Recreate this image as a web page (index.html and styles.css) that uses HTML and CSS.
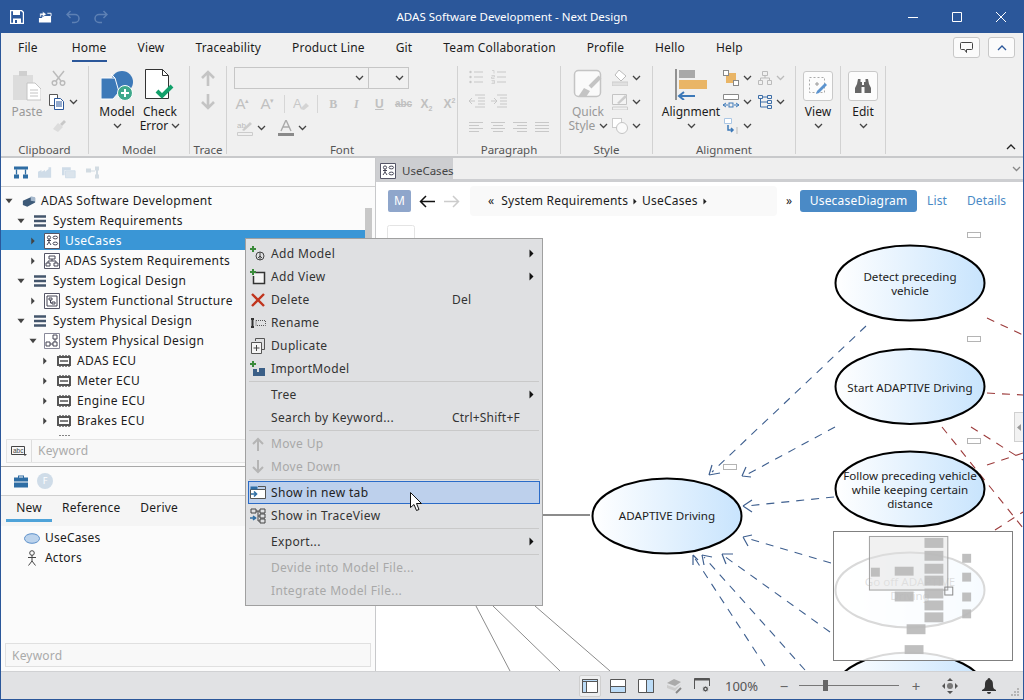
FILE: index.html
```html
<!DOCTYPE html>
<html lang="en">
<head>
<meta charset="utf-8">
<title>ADAS Software Development - Next Design</title>
<link rel="stylesheet" href="styles.css">
</head>
<body>
<svg class="defs" width="0" height="0" aria-hidden="true">
  <defs>
    <symbol id="chev" viewBox="0 0 9 6"><path d="M1 1l3.5 3.5L8 1" fill="none" stroke="currentColor" stroke-width="1.3"/></symbol>
    <symbol id="tri" viewBox="0 0 5 9"><path d="M0.5 0.5L4.5 4.5L0.5 8.5z" fill="currentColor"/></symbol>
    <symbol id="down" viewBox="0 0 9 6"><path d="M0.5 0.5h8L4.5 5.5z" fill="currentColor"/></symbol>
    <symbol id="folder" viewBox="0 0 12 12"><path d="M0 1.500h12M0 6h12M0 10.500h12" stroke="currentColor" stroke-width="2.600" fill="none"/></symbol>
    <symbol id="chip" viewBox="0 0 14 14"><path d="M1 3h12v8H1z" fill="none" stroke="currentColor" stroke-width="2"/><path d="M3 1v2M6 1v2M9 1v2M12 1v2M3 11v2M6 11v2M9 11v2M12 11v2M3 7h8" stroke="currentColor" stroke-width="1.400"/></symbol>
    <symbol id="usecase" viewBox="0 0 16 16"><path d="M.5.500h15v15H.5z" fill="#fff" stroke="#556" /><circle cx="5" cy="4.500" r="1.600" fill="none" stroke="#445"/><path d="M5 6v3M3 7.500h4M5 9l-2 3M5 9l2 3" stroke="#445" fill="none"/><ellipse cx="11.300" cy="4.500" rx="2.300" ry="1.400" fill="none" stroke="#445"/><ellipse cx="11.300" cy="10.500" rx="2.300" ry="1.400" fill="none" stroke="#445"/></symbol>
    <symbol id="listicon" viewBox="0 0 16 14"><circle cx="1.500" cy="2" r="1.200" fill="currentColor"/><circle cx="1.500" cy="7" r="1.200" fill="currentColor"/><circle cx="1.500" cy="12" r="1.200" fill="currentColor"/><path d="M5 2h9M5 7h9M5 12h9" stroke="currentColor"/></symbol>
    <symbol id="numicon" viewBox="0 0 16 14"><path d="M1 .5h2v3M.5 5.500h3v1.500h-3v1.500h3M.5 10.500h3v3h-3M1 12h2.500" fill="none" stroke="currentColor" stroke-width=".7"/><path d="M6 2h9M6 7h9M6 12h9" stroke="currentColor"/></symbol>
    <symbol id="lines" viewBox="0 0 14 10"><path d="M0 .5h14M0 3.500h14M0 6.500h14M0 9.500h14" stroke="currentColor"/></symbol>
    <symbol id="lines2" viewBox="0 0 14 10"><path d="M0 .5h14M2 3.500h10M0 6.500h14M2 9.500h10" stroke="currentColor"/></symbol>
    <symbol id="lines3" viewBox="0 0 14 10"><path d="M0 .5h14M4 3.500h10M0 6.500h14M4 9.500h10" stroke="currentColor"/></symbol>
    <symbol id="lines4" viewBox="0 0 14 10"><path d="M0 .5h14M0 3.500h10M0 6.500h14M0 9.500h10" stroke="currentColor"/></symbol>
  </defs>
</svg>

<header class="titlebar">
  <div class="qat">
    <svg class="qat-icon" viewBox="0 0 14 14"><path d="M.5.500h11l2 2v11H.5z" fill="none" stroke="#fff" stroke-width="1.400"/><path d="M3 1h7v4H3zM3 8.500h8V13H3z" fill="#fff"/><path d="M5 10h2v3H5z" fill="#2b579a"/></svg>
    <svg class="qat-icon" viewBox="0 0 15 14"><path d="M1 8h3l1-2h9v7H1z" fill="#fff"/><path d="M2 7V3h3V1l4 3-4 3V5H3.500v2z" fill="#fff" stroke="#2b579a" stroke-width=".5"/><path d="M10 3h4v3" fill="none" stroke="#fff"/></svg>
    <svg class="qat-icon faded" viewBox="0 0 14 14"><path d="M4.500 1L1 4.500 4.500 8M1.500 4.500H9a4 4 0 0 1 0 8H6" fill="none" stroke="#5d80b4" stroke-width="1.500"/></svg>
    <svg class="qat-icon faded" viewBox="0 0 14 14"><path d="M9.500 1L13 4.500 9.500 8M12.500 4.500H5a4 4 0 0 0 0 8h3" fill="none" stroke="#5d80b4" stroke-width="1.500"/></svg>
  </div>
  <div class="wintitle">ADAS Software Development - Next Design</div>
  <div class="winbtns">
    <svg viewBox="0 0 10 10"><path d="M0 5.500h10" stroke="#fff"/></svg>
    <svg viewBox="0 0 10 10"><path d="M.5.500h9v9h-9z" fill="none" stroke="#fff"/></svg>
    <svg viewBox="0 0 10 10"><path d="M0 0l10 10M10 0L0 10" stroke="#fff"/></svg>
  </div>
</header>

<nav class="tabs">
  <span class="tab tab-file">File</span>
  <span class="tab tab-on">Home</span>
  <span class="tab">View</span>
  <span class="tab">Traceability</span>
  <span class="tab">Product Line</span>
  <span class="tab">Git</span>
  <span class="tab">Team Collaboration</span>
  <span class="tab">Profile</span>
  <span class="tab">Hello</span>
  <span class="tab">Help</span>
  <div class="tab-tools">
    <span class="toolbtn"><svg width="13" height="13" viewBox="0 0 13 13"><path d="M1.500 1.500h10a1 1 0 0 1 1 1v5a1 1 0 0 1-1 1H6.500v3l-2-3h-3a1 1 0 0 1-1-1v-5a1 1 0 0 1 1-1z" fill="none" stroke="#444"/></svg></span>
    <span class="toolbtn"><svg width="10" height="6" viewBox="0 0 10 6"><path d="M1 5l4-4 4 4" fill="none" stroke="#2b579a" stroke-width="1.300"/></svg></span>
  </div>
</nav>

<section class="ribbon">
  <div class="group g-clip">
    <div class="g-body clip-body">
      <div class="big dim">
        <svg class="paste" viewBox="0 0 28 31"><path d="M0 5h20v25H0z" fill="#dcdcdc"/><path d="M6 1h8v5H6z" fill="#cfcfcf"/><path d="M14 13h8l6 6v11H14z" fill="#fff" stroke="#c4c4c4"/><path d="M17 20h8M17 23h8M17 26h8" stroke="#c4c4c4"/></svg>
        <span class="ln">Paste</span>
      </div>
      <div class="small-col">
        <svg class="ic16 inset" viewBox="0 0 16 16"><circle cx="3.500" cy="13" r="2.300" fill="none" stroke="#bbb" stroke-width="1.500"/><circle cx="11.500" cy="13" r="2.300" fill="none" stroke="#bbb" stroke-width="1.500"/><path d="M2 1l8 10M13 1L5 11" stroke="#bbb" stroke-width="1.500"/></svg>
        <div class="small"><svg class="ic16" viewBox="0 0 16 16"><path d="M.5.500h8v11h-8z" fill="#fff" stroke="#555"/><path d="M5.500 4.500h6l3 3v8h-9z" fill="#fff" stroke="#2b579a"/><path d="M7 8h6M7 10h6M7 12h6" stroke="#2b579a"/></svg><svg class="chev" ><use href="#chev"/></svg></div>
        <svg class="ic16 inset" viewBox="0 0 16 16"><path d="M9 6l4-4 2 2-4 4z" fill="#c8c8c8"/><path d="M2 11l5-6 5 4-5 5z" fill="#dcdcdc"/></svg>
      </div>
    </div>
    <div class="g-label">Clipboard</div>
  </div>

  <div class="group g-model">
    <div class="g-body model-body">
      <div class="big">
        <svg class="bigicon" viewBox="0 0 32 31"><circle cx="21" cy="13" r="11" fill="#3d79b8"/><path d="M0 9h14l4 14-6 7H0z" fill="#3d79b8" stroke="#fff"/><path d="M14 9l-4-4" stroke="#fff"/><circle cx="24" cy="24" r="7.500" fill="#3fa88b" stroke="#fff"/><path d="M24 20v8M20 24h8" stroke="#fff" stroke-width="2"/></svg>
        <span class="ln">Model</span>
        <svg class="chev lnchev"><use href="#chev"/></svg>
      </div>
      <div class="big">
        <svg class="bigicon" viewBox="0 0 32 31"><path d="M1.500.500h17l6 6v23h-23z" fill="#fff" stroke="#333"/><path d="M18.500.500v6h6" fill="none" stroke="#333"/><path d="M13 22l5 5 10-10" fill="none" stroke="#12a06a" stroke-width="4"/></svg>
        <span class="ln2">Check<br>Error <svg class="chev inl"><use href="#chev"/></svg></span>
      </div>
    </div>
    <div class="g-label">Model</div>
  </div>

  <div class="group g-trace">
    <div class="g-body trace-body">
      <svg class="ic16" viewBox="0 0 16 16"><path d="M8 16V2M2 8l6-6 6 6" fill="none" stroke="#c4c4c4" stroke-width="2.600"/></svg>
      <svg class="ic16" viewBox="0 0 16 16"><path d="M8 0v14M2 8l6 6 6-6" fill="none" stroke="#c4c4c4" stroke-width="2.600"/></svg>
    </div>
    <div class="g-label">Trace</div>
  </div>

  <div class="group g-font">
    <div class="g-body font-body">
      <div class="combos">
        <span class="combo c-name"><svg class="chev"><use href="#chev"/></svg></span>
        <span class="combo c-size"><svg class="chev"><use href="#chev"/></svg></span>
      </div>
      <div class="font-row">
        <span class="glyph g-a1">A<sup>▴</sup></span><span class="glyph g-a2">A<sup>▾</sup></span>
        <i class="vsep"></i>
        <svg class="ic16" viewBox="0 0 16 16"><text x="0" y="12" font-size="13" fill="#c8c8c8" font-family="Liberation Sans">A</text><path d="M7 13l6-6 3 3-5 4z" fill="#d4d4d4"/></svg>
        <i class="vsep"></i>
        <span class="glyph b">B</span><span class="glyph it">I</span><span class="glyph u">U</span><span class="glyph st">abc</span><span class="glyph x1">X<sub>2</sub></span><span class="glyph x2">X<sup>2</sup></span>
      </div>
      <div class="font-row fr3">
        <div class="small"><svg class="ic16" viewBox="0 0 16 16"><text x="0" y="8" font-size="8" fill="#bbb" font-family="Liberation Sans">ab</text><path d="M5 10l8-8 2 2-8 7z" fill="#ccc"/><path d="M.5 12.500h15v3H.5z" fill="none" stroke="#ccc"/></svg><svg class="chev"><use href="#chev"/></svg></div>
        <div class="small"><svg class="ic16" viewBox="0 0 16 16"><path d="M3 11L8 0l5 11M5 7h6" fill="none" stroke="#aaa" stroke-width="1.400"/><path d="M0 13h16v3H0z" fill="#8a8a8a"/></svg><svg class="chev"><use href="#chev"/></svg></div>
      </div>
    </div>
    <div class="g-label">Font</div>
  </div>

  <div class="group g-para">
    <div class="g-body para-body">
      <div class="para-row"><svg class="ic14" viewBox="0 0 16 14"><use href="#listicon"/></svg><svg class="ic14" viewBox="0 0 16 14"><use href="#numicon"/></svg></div>
      <div class="para-row"><svg class="ic14 lg" viewBox="0 0 16 14"><path d="M6 1h10M9 4h7M9 7h7M9 10h7M6 13h10M0 7h6M3 4L0 7l3 3" fill="none" stroke="#c8c8c8"/></svg><svg class="ic14 lg" viewBox="0 0 16 14"><path d="M6 1h10M9 4h7M9 7h7M9 10h7M6 13h10M0 7h6M3 4l3 3-3 3" fill="none" stroke="#c8c8c8"/></svg></div>
      <div class="para-row align-row"><svg class="ic-al"><use href="#lines4"/></svg><svg class="ic-al"><use href="#lines2"/></svg><svg class="ic-al"><use href="#lines3"/></svg><svg class="ic-al"><use href="#lines"/></svg></div>
    </div>
    <div class="g-label">Paragraph</div>
  </div>

  <div class="group g-style">
    <div class="g-body style-body">
      <div class="big dim">
        <svg class="bigicon" viewBox="0 0 32 31"><rect x="2.500" y="1.500" width="26" height="26" rx="4" fill="#fafafa" stroke="#c4c4c4" stroke-width="1.500"/><path d="M28 8L18 18" stroke="#c4c4c4" stroke-width="4"/><path d="M6 28l6-9 6 3-4 6z" fill="#c4c4c4"/></svg>
        <span class="ln2">Quick<br>Style <svg class="chev inl"><use href="#chev"/></svg></span>
      </div>
      <div class="small-col">
        <div class="small"><svg class="ic16" viewBox="0 0 16 16"><path d="M7 0l7 6-5 5-6-6z" fill="#fff" stroke="#bbb"/><path d="M0 12h16v4H0z" fill="#e0e0e0" stroke="#ccc"/></svg><svg class="chev"><use href="#chev"/></svg></div>
        <div class="small"><svg class="ic16" viewBox="0 0 16 16"><path d="M.5.500h14v10H.5z" fill="#f4f4f4" stroke="#c4c4c4"/><path d="M5 9l8-8 2 2-8 7z" fill="#ccc"/><path d="M.5 13h15v3H.5z" fill="none" stroke="#ccc"/></svg><svg class="chev"><use href="#chev"/></svg></div>
        <div class="small"><svg class="ic16" viewBox="0 0 16 16"><rect x=".5" y=".5" width="9" height="9" fill="#fff" stroke="#ccc"/><circle cx="10" cy="10" r="5.500" fill="#fafafa" stroke="#c4c4c4"/></svg><svg class="chev"><use href="#chev"/></svg></div>
      </div>
    </div>
    <div class="g-label">Style</div>
  </div>

  <div class="group g-align">
    <div class="g-body align-body">
      <div class="big big-al">
        <svg class="bigicon" viewBox="0 0 32 31"><path d="M1 0v31" stroke="#333" stroke-width="1"/><path d="M4 1h16v8H4z" fill="#a8a8a8"/><path d="M4 11h28v9H4z" fill="#e9b566"/><path d="M20 27H4M9 23l-5 4 5 4" fill="none" stroke="#3d79b8" stroke-width="2"/></svg>
        <span class="ln">Alignment</span>
        <svg class="chev lnchev"><use href="#chev"/></svg>
      </div>
      <div class="small-col">
        <div class="small"><svg class="ic16" viewBox="0 0 16 16"><rect x="3" y="3" width="10" height="10" fill="#e9b566"/><rect x=".5" y=".5" width="5" height="5" fill="#fff" stroke="#888"/><rect x="10.500" y="10.500" width="5" height="5" fill="#fff" stroke="#888"/></svg><svg class="chev"><use href="#chev"/></svg></div>
        <div class="small"><svg class="ic16" viewBox="0 0 16 16"><path d="M.5.500h15v5H.5z" fill="#fff" stroke="#888"/><path d="M0 11h5M11 11h5M3 9l-3 2 3 2M13 9l3 2-3 2" fill="none" stroke="#3d79b8"/><rect x="6" y="9" width="4" height="4" fill="none" stroke="#3d79b8"/></svg><svg class="chev"><use href="#chev"/></svg></div>
        <div class="small"><svg class="ic16" viewBox="0 0 16 16"><path d="M1.500.5h7v5h-7z" fill="#fff" stroke="#aac6e4"/><path d="M5 7v5h5M8 10l2 2-2 2" fill="none" stroke="#3d79b8" stroke-width="1.500"/><path d="M14 9v7" stroke="#bbb"/></svg><svg class="chev"><use href="#chev"/></svg></div>
      </div>
      <div class="small-col small-col-2">
        <div class="small"><svg class="ic14b" viewBox="0 0 14 14"><path d="M4.500.5h5v4h-5zM.5 9.500h4v4h-4zM9.500 9.500h4v4h-4zM7 4.500V7M2.500 9.500V7h9v2.500" fill="none" stroke="#bbb"/></svg><svg class="chev light"><use href="#chev"/></svg></div>
        <div class="small"><svg class="ic14b" viewBox="0 0 14 14"><path d="M.5.500h4v3h-4zM9.500.500h4v3h-4zM9.500 5.500h4v3h-4zM9.500 10.500h4v3h-4zM4.500 2h5M2.500 3.500V12h7M2.500 7h7" fill="none" stroke="#3d6ea8"/></svg><svg class="chev"><use href="#chev"/></svg></div>
      </div>
    </div>
    <div class="g-label">Alignment</div>
  </div>

  <div class="group g-btn">
    <div class="g-body btn-body">
      <span class="whitebtn"><svg width="18" height="18" viewBox="0 0 18 18"><path d="M.5.500h15v15H.5z" fill="none" stroke="#aaa" stroke-dasharray="2 2"/><path d="M8 5v4M6 7h4" stroke="#999"/><path d="M8 14l8-8 2 2-8 8-3 1z" fill="#5b93cf"/></svg></span>
      <span class="ln">View</span>
      <svg class="chev lnchev"><use href="#chev"/></svg>
    </div>
  </div>
  <div class="group g-btn">
    <div class="g-body btn-body">
      <span class="whitebtn"><svg width="16" height="14" viewBox="0 0 16 14"><path d="M3 0h2.500v3H7v3h2V3h1.500V0H13l1 5 2 4v5h-6.500V8h-3v6H0V9l2-4z" fill="#666"/></svg></span>
      <span class="ln">Edit</span>
      <svg class="chev lnchev"><use href="#chev"/></svg>
    </div>
  </div>
  <svg class="collapse" width="10" height="6" viewBox="0 0 10 6"><path d="M1 5l4-4 4 4" fill="none" stroke="#222" stroke-width="1.300"/></svg>
</section>

<main class="main">
  <aside class="left">
    <div class="lt-toolbar">
      <svg class="ic-tb" viewBox="0 0 14 12"><path d="M0 0h14v3H0zM0 8h5v4H0zM9 8h5v4H9z" fill="#2e6da4"/><path d="M2.500 3v5M11.500 3v5" stroke="#2e6da4" stroke-width="1.300"/></svg>
      <svg class="ic-tb" viewBox="0 0 16 12"><path d="M0 5l4-2v2l4-2v2l4-3V0h3v12H0z" fill="#cfdce8"/></svg>
      <svg class="ic-tb" viewBox="0 0 16 12"><path d="M0 0h10v3h-7v6H0z" fill="#cfdce8"/><path d="M4 4h11v8H4z" fill="#dbe4ec" stroke="#cfdce8"/></svg>
      <svg class="ic-tb" viewBox="0 0 14 12"><path d="M0 2h5v4H0zM9 0h4v4H9zM9 8h4v4H9zM5 4h4v1H5zM10 4h2v4h-2z" fill="#d2dbe2"/></svg>
    </div>
    <div class="tree">
      <div class="node"><svg class="tw"><use href="#down"/></svg><svg class="nic root" viewBox="0 0 16 14"><path d="M1 6l9-4 5 1v5l-9 5-5-2z" fill="#3d5a78"/><path d="M10 1l5 1v5l-5-1z" fill="#a5b8cc"/></svg><span>ADAS Software Development</span></div>
      <div class="node l1"><svg class="tw"><use href="#down"/></svg><svg class="nic fold"><use href="#folder"/></svg><span>System Requirements</span></div>
      <div class="node l2 sel"><svg class="tw"><use href="#tri"/></svg><svg class="nic" viewBox="0 0 16 16"><use href="#usecase"/></svg><span>UseCases</span></div>
      <div class="node l2"><svg class="tw"><use href="#tri"/></svg><svg class="nic" viewBox="0 0 16 16"><path d="M.5.500h15v15H.5z" fill="#fff" stroke="#556"/><path d="M5 3h6v3H5zM2 10h4v3H2zM10 10h4v3h-4zM8 6v2M4 10V8h8v2" fill="none" stroke="#445"/></svg><span>ADAS System Requirements</span></div>
      <div class="node l1"><svg class="tw"><use href="#down"/></svg><svg class="nic fold"><use href="#folder"/></svg><span>System Logical Design</span></div>
      <div class="node l2"><svg class="tw"><use href="#tri"/></svg><svg class="nic" viewBox="0 0 16 16"><path d="M.5.500h15v15H.5z" fill="#fff" stroke="#556"/><path d="M3 3h10v10H3zM5 5h3v2H5zM8 9h3v2H8zM6.500 7v3H8" fill="none" stroke="#445"/></svg><span>System Functional Structure</span></div>
      <div class="node l1"><svg class="tw"><use href="#down"/></svg><svg class="nic fold"><use href="#folder"/></svg><span>System Physical Design</span></div>
      <div class="node l2"><svg class="tw"><use href="#down"/></svg><svg class="nic" viewBox="0 0 16 16"><path d="M.5.500h15v15H.5z" fill="#fff" stroke="#889"/><path d="M9 2h4v4H9zM2 9h4v4H2zM9 9h4v4H9zM6 11h3M11 6v3" fill="none" stroke="#445"/></svg><span>System Physical Design</span></div>
      <div class="node l3"><svg class="tw"><use href="#tri"/></svg><svg class="nic chip"><use href="#chip"/></svg><span>ADAS ECU</span></div>
      <div class="node l3"><svg class="tw"><use href="#tri"/></svg><svg class="nic chip"><use href="#chip"/></svg><span>Meter ECU</span></div>
      <div class="node l3"><svg class="tw"><use href="#tri"/></svg><svg class="nic chip"><use href="#chip"/></svg><span>Engine ECU</span></div>
      <div class="node l3"><svg class="tw"><use href="#tri"/></svg><svg class="nic chip"><use href="#chip"/></svg><span>Brakes ECU</span></div>
      <div class="node l3"><span class="tw"></span><svg class="nic chip"><use href="#chip"/></svg></div>
      <div class="thumb"></div>
    </div>
    <div class="searchrow">
      <span class="searchic"><svg width="16" height="10" viewBox="0 0 16 10"><path d="M.5.500h13v8H.5z" fill="none" stroke="#444"/><text x="2" y="7" font-size="6.500" fill="#444" font-family="Liberation Sans">abc</text><path d="M12 8h4l-2 2z" fill="#444"/></svg></span>
      <span class="ph">Keyword</span>
    </div>
    <div class="tb-toolbar">
      <svg class="ic-tb" viewBox="0 0 14 12"><path d="M4 2V0h6v2h4v4H0V2zM5 2h4V1H5zM0 7h14v5H0z" fill="#2e6da4"/></svg>
      <span class="fcircle">F</span>
    </div>
    <div class="subtabs">
      <span class="subtab on">New</span><span class="subtab">Reference</span><span class="subtab">Derive</span>
    </div>
    <ul class="items">
      <li><svg width="16" height="11" viewBox="0 0 16 11"><ellipse cx="8" cy="5.500" rx="7.500" ry="4.800" fill="#bcd3ec" stroke="#5b8fc9"/></svg>UseCases</li>
      <li><svg width="16" height="16" viewBox="0 0 16 16"><circle cx="8" cy="3" r="2.300" fill="none" stroke="#444"/><path d="M8 5v6M4 7.500h8M8 11l-3.500 4.500M8 11l3.500 4.500" stroke="#444" fill="none"/></svg>Actors</li>
    </ul>
    <div class="kw2">Keyword</div>
  </aside>

  <section class="right">
    <div class="doctabs">
      <span class="doctab"><svg width="16" height="16" viewBox="0 0 16 16"><use href="#usecase"/></svg>UseCases</span>
      <svg class="chev dtchev"><use href="#chev"/></svg>
    </div>
    <div class="doctools">
      <span class="mbtn">M</span>
      <svg class="nav" viewBox="0 0 16 13"><path d="M16 6.500H2M7 1L1.500 6.500 7 12" fill="none" stroke="#111" stroke-width="1.500"/></svg>
      <svg class="nav" viewBox="0 0 16 13"><path d="M0 6.500h14M9 1l5.500 5.500L9 12" fill="none" stroke="#ccc" stroke-width="1.500"/></svg>
      <div class="crumbs"><span class="cq">«</span><span>System Requirements</span><svg class="ctri"><use href="#tri"/></svg><span>UseCases</span><svg class="ctri"><use href="#tri"/></svg></div>
      <span class="cq2">»</span>
      <span class="view-on">UsecaseDiagram</span>
      <span class="view-link vl1">List</span>
      <span class="view-link">Details</span>
    </div>
    <div class="canvas">
      <svg class="dia" viewBox="376 220 648 451">
        <defs>
          <linearGradient id="uc" x1="0" x2="1" y1="0" y2="0"><stop offset="0" stop-color="#fff"/><stop offset="1" stop-color="#c8e4fd"/></linearGradient>
        </defs>
        <rect x="387.500" y="225.500" width="27" height="30" rx="2" fill="#fff" stroke="#e4e4e4"/>
        <g class="lbl">
          <rect x="967.500" y="232.500" width="13" height="5"/><rect x="967.500" y="336.500" width="13" height="5"/><rect x="967.500" y="438.500" width="13" height="5"/><rect x="723.500" y="464.500" width="13" height="5"/>
        </g>
        <g class="gl">
          <path d="M543 515H590" stroke-width="2"/>
          <path d="M476 606L510 671M493 606L560 671M535 606L610 671"/>
        </g>
        <g class="red">
          <path d="M987 318L1023 335M987 393L1023 395M942 427L1023 528M971 427L1023 460M987 465L1023 453M995 530L1023 512"/>
        </g>
        <g class="blue">
          <path d="M866 326L712 472M835 427L746 475M834 497L746 506M831 563L746 538M830 632L724 556M805 670L704 557M765 666L694 557"/>
        </g>
        <g class="head">
          <path d="M709 475L720 473M709 475L712 465"/>
          <path d="M742 476L751 477M742 476L746 467"/>
          <path d="M743 506L752 500M743 506L752 512"/>
          <path d="M743 537L752 535M743 537L748 546"/>
          <path d="M722 554L733 554M722 554L726 564"/>
          <path d="M702 555L712 557M702 555L704 565"/>
          <path d="M693 555L698 560M693 555L693 565"/>
        </g>
        <g class="uc">
          <ellipse cx="910" cy="283" rx="74.500" ry="37.500"/>
          <ellipse cx="910" cy="386.500" rx="74.500" ry="37.500"/>
          <ellipse cx="910" cy="489" rx="74.500" ry="37.500"/>
          <ellipse cx="667" cy="516" rx="74.500" ry="37.500"/>
          <ellipse cx="910" cy="590" rx="74.500" ry="37.500"/>
          <ellipse cx="910" cy="690" rx="74.500" ry="37.500"/>
        </g>
        <g class="uct">
          <text x="910" y="281">Detect preceding</text><text x="910" y="295">vehicle</text>
          <text x="910" y="392">Start ADAPTIVE Driving</text>
          <text x="910" y="480">Follow preceding vehicle</text><text x="910" y="494">while keeping certain</text><text x="910" y="508">distance</text>
          <text x="667" y="520">ADAPTIVE Driving</text>
          <text x="910" y="586">Go off ADAPTIVE</text><text x="910" y="600">Driving</text>
        </g>
      </svg>
      <div class="splitter"><svg width="4" height="7" viewBox="0 0 4 7"><path d="M4 0v7L0 3.500z" fill="#999"/></svg></div>
      <div class="minimap">
        <svg viewBox="833 531 179 129">
          <rect x="868.500" y="535.500" width="79" height="54" fill="#e0e0e0" fill-opacity=".45" stroke="#a0a0a0"/>
          <g fill="#b8b8b8" fill-opacity=".9">
            <rect x="924" y="537" width="19" height="10"/><rect x="924" y="550" width="19" height="10"/><rect x="924" y="563" width="19" height="10"/><rect x="924" y="575" width="19" height="10"/><rect x="924" y="588" width="19" height="10"/><rect x="924" y="600" width="19" height="10"/><rect x="924" y="612" width="19" height="10"/>
            <rect x="870" y="567" width="9" height="9"/><rect x="894" y="566" width="19" height="9"/><rect x="894" y="591" width="19" height="10"/>
            <rect x="962" y="553" width="9" height="9"/><rect x="962" y="572" width="9" height="9"/><rect x="962" y="592" width="9" height="9"/><rect x="962" y="609" width="9" height="9"/>
            <rect x="906" y="624" width="19" height="10"/><rect x="904" y="645" width="19" height="9"/>
          </g>
          <rect x="944.500" y="586.500" width="8" height="8" fill="none" stroke="#888"/>
        </svg>
      </div>
    </div>
  </section>
</main>

<footer class="status">
  <span class="st-btn st-on"><svg width="16" height="14" viewBox="0 0 16 14"><path d="M.5.500h15v13H.5z" fill="#fff" stroke="#555"/><path d="M.5.500h4v13h-4z" fill="#bcdcf7" stroke="#555"/><path d="M.5.500h15v2H.5z" fill="#bcdcf7" stroke="#555"/></svg></span>
  <span class="st-btn"><svg width="16" height="14" viewBox="0 0 16 14"><path d="M.5.500h15v13H.5z" fill="#fff" stroke="#555"/><path d="M.5 7.500h15v6H.5z" fill="#bcdcf7" stroke="#555"/></svg></span>
  <span class="st-btn"><svg width="16" height="14" viewBox="0 0 16 14"><path d="M.5.500h15v13H.5z" fill="#fff" stroke="#555"/><path d="M8.500.500h7v13h-7z" fill="#bcdcf7" stroke="#555"/></svg></span>
  <span class="st-btn"><svg width="16" height="16" viewBox="0 0 16 16"><path d="M1 5l7-4 7 3-6 4z" fill="#aaa"/><path d="M1 7l8 3 6-4-6 7-8-3z" fill="#ccc"/><path d="M10 15l5-5" stroke="#888" stroke-width="2"/></svg></span>
  <span class="st-btn"><svg width="16" height="15" viewBox="0 0 16 15"><path d="M.5 11V.5h15V8" fill="none" stroke="#555"/><path d="M.5.500h15v2H.5z" fill="#555"/><circle cx="11.500" cy="11" r="3" fill="#555" stroke="#e1e2e4"/><circle cx="11.500" cy="11" r="1" fill="#e1e2e4"/></svg></span>
  <span class="zoomtxt">100%</span>
  <span class="zbtn">−</span>
  <span class="slider"><i></i></span>
  <span class="zbtn zplus">+</span>
  <svg class="st-move" width="16" height="16" viewBox="0 0 16 16"><path d="M8 0l3 3H5zM8 16l-3-3h6zM0 8l3-3v6zM16 8l-3 3V5z" fill="#555"/><circle cx="8" cy="8" r="3" fill="#777"/></svg>
  <svg class="st-bell" width="14" height="16" viewBox="0 0 14 16"><path d="M7 0a1.500 1.500 0 0 1 1.500 1.500C11 2.500 11 5 11 8c0 2 1 3 3 4v1H0v-1c2-1 3-2 3-4 0-3 0-5.500 2.500-6.500A1.500 1.500 0 0 1 7 0z" fill="#333"/><path d="M5 14h4a2 2 0 0 1-4 0z" fill="#333"/></svg>
  <svg class="grip" width="9" height="9" viewBox="0 0 9 9"><path d="M7 1h2v2H7zM4 4h2v2H4zM7 4h2v2H7zM1 7h2v2H1zM4 7h2v2H4zM7 7h2v2H7z" fill="#b5b5b5"/></svg>
</footer>

<div class="menu">
  <div class="mi"><svg class="mic" viewBox="0 0 16 16"><path d="M3 0v6M0 3h6" stroke="#3a8a3a" stroke-width="2"/><circle cx="10" cy="10" r="4" fill="none" stroke="#444"/><path d="M10 6v8M8 12l2-2 2 2" stroke="#444" fill="none"/></svg><span class="mt">Add Model</span><svg class="msub"><use href="#tri"/></svg></div>
  <div class="mi"><svg class="mic" viewBox="0 0 16 16"><path d="M4.500 3.500h10v11h-11V7" fill="#f4f4f4" stroke="#333" stroke-width="1.500"/><path d="M3 0v6M0 3h6" stroke="#3a8a3a" stroke-width="2"/></svg><span class="mt">Add View</span><svg class="msub"><use href="#tri"/></svg></div>
  <div class="mi"><svg class="mic" viewBox="0 0 16 16"><path d="M2 2l12 12M14 2L2 14" stroke="#c0341d" stroke-width="2.400"/></svg><span class="mt">Delete</span><span class="ms">Del</span></div>
  <div class="mi"><svg class="mic" viewBox="0 0 16 16"><path d="M1 4h3M1 12h3M2.500 4v8" stroke="#333" stroke-width="2"/><path d="M6 5.500h9.500v5H6z" fill="none" stroke="#555" stroke-dasharray="1 1"/></svg><span class="mt">Rename</span></div>
  <div class="mi"><svg class="mic" viewBox="0 0 16 16"><path d="M5.500 3V.5h9v11H12" fill="none" stroke="#555"/><path d="M1.500 4.500h10v11h-10z" fill="#f4f4f4" stroke="#555"/><path d="M6.500 7v6M3.500 10h6" stroke="#444"/></svg><span class="mt">Duplicate</span></div>
  <div class="mi"><svg class="mic" viewBox="0 0 16 16"><path d="M3 0v6M0 3h6" stroke="#3a8a3a" stroke-width="2"/><path d="M3 8h4v3H3zM9 7h6v4H9z" fill="#3b5f87"/><path d="M3 11h12v4H3z" fill="#3b5f87"/></svg><span class="mt">ImportModel</span></div>
  <hr class="msep">
  <div class="mi"><span class="mic"></span><span class="mt">Tree</span><svg class="msub"><use href="#tri"/></svg></div>
  <div class="mi"><span class="mic"></span><span class="mt">Search by Keyword...</span><span class="ms">Ctrl+Shift+F</span></div>
  <hr class="msep">
  <div class="mi off"><svg class="mic" viewBox="0 0 16 16"><path d="M8 15V3M3 8l5-5 5 5" fill="none" stroke="#b5b5b5" stroke-width="2"/></svg><span class="mt">Move Up</span></div>
  <div class="mi off"><svg class="mic" viewBox="0 0 16 16"><path d="M8 1v12M3 8l5 5 5-5" fill="none" stroke="#b5b5b5" stroke-width="2"/></svg><span class="mt">Move Down</span></div>
  <hr class="msep">
  <div class="mi hot"><svg class="mic" viewBox="0 0 16 16"><path d="M.5 4.500h15v9H.5z" fill="#fff" stroke="#555"/><path d="M.5 1.500h7v3h-7z" fill="#2e6da4"/><path d="M8 1.500h7.500v3" fill="none" stroke="#555"/><path d="M1 9h5M4 6.500L6.500 9 4 11.500" fill="none" stroke="#2e6da4" stroke-width="1.600"/></svg><span class="mt">Show in new tab</span></div>
  <div class="mi"><svg class="mic" viewBox="0 0 16 16"><path d="M1 1h5v4H1zM10 1h5v4h-5zM10 6h5v4h-5zM10 11h5v4h-5zM6 3h4M8 3v10h2M8 8h2" fill="none" stroke="#444"/><path d="M0 10h5M3 8l2.500 2L3 12" fill="none" stroke="#2e6da4" stroke-width="1.600"/></svg><span class="mt">Show in TraceView</span></div>
  <hr class="msep">
  <div class="mi"><span class="mic"></span><span class="mt">Export...</span><svg class="msub"><use href="#tri"/></svg></div>
  <hr class="msep">
  <div class="mi off"><span class="mic"></span><span class="mt">Devide into Model File...</span></div>
  <div class="mi off"><span class="mic"></span><span class="mt">Integrate Model File...</span></div>
</div>

<svg class="cursor" width="14" height="20" viewBox="0 0 14 20"><path d="M.5.500v15l3.500-3 2.500 6 2.500-1-2.500-6h5z" fill="#fff" stroke="#111"/></svg>
</body>
</html>
```

FILE: styles.css
```css
* { box-sizing: border-box; }
html, body { margin: 0; height: 100%; }
body {
  width: 1024px; height: 700px; overflow: hidden; position: relative;
  display: flex; flex-direction: column;
  background: #f0f0f0;
  border: solid #2b579a; border-width: 0 1px 1px 1px;
  font: 12px/14px "Noto Sans", "Open Sans", sans-serif;
  color: #1c1c1c;
}
.defs { position: absolute; }
svg { display: block; flex: none; }

/* title bar */
.titlebar {
  height: 33px; margin: 0 -1px; background: #2b579a; color: #fff;
  display: grid; grid-template-columns: 1fr auto 1fr; align-items: center; flex: none;
}
.qat { display: flex; gap: 14px; padding-left: 10px; }
.qat-icon { width: 14px; height: 14px; }
.wintitle { text-align: center; font-size: 11.500px; padding-top: 1px; }
.winbtns { display: flex; justify-content: flex-end; gap: 34px; padding-right: 18px; }
.winbtns svg { width: 10px; height: 10px; }

/* tabs */
.tabs { height: 33px; flex: none; display: flex; gap: 31px; padding-left: 17px; background: #f0f0f0; position: relative; letter-spacing: .15px; }
.tab { height: 29px; line-height: 29px; position: relative; white-space: nowrap; }
.tab-file { margin-right: 3px; }
.tab-on::after { content: ""; position: absolute; left: 0; right: 0; bottom: 0; height: 2px; background: #2b579a; }
.tab-tools { margin-left: auto; display: flex; gap: 8px; padding: 4px 8px 0 0; }
.toolbtn { width: 27px; height: 21px; background: #fbfbfb; border: 1px solid #c8c8c8; border-radius: 3px; display: flex; align-items: center; justify-content: center; }

/* ribbon */
.ribbon { height: 92px; flex: none; display: flex; position: relative; border-bottom: 2px solid #c8c9cb; background: #f0f0f0; }
.group { height: 88px; padding-top: 1px; border-right: 1px solid #d2d2d2; position: relative; flex: none; }
.g-body { height: 76px; }
.g-label { height: 14px; line-height: 14px; text-align: center; color: #555; font-size: 11.500px; }
.g-clip { width: 88px; } .g-model { width: 101px; } .g-trace { width: 37px; } .g-font { width: 231px; }
.g-para { width: 103px; } .g-style { width: 92px; } .g-align { width: 143px; } .g-btn { width: 45px; }
.clip-body { display: flex; padding-left: 4px; }
.model-body { display: flex; padding-left: 6px; gap: 0; }
.model-body .big + .big { margin-left: -1px; }
.big { display: flex; flex-direction: column; align-items: center; width: 44px; flex: none; }
.big.dim { color: #999; }
.bigicon { width: 32px; height: 31px; margin: 2px 0 5px; }
.paste { width: 28px; height: 31px; margin: 3px 0 4px; }
.ln { display: flex; align-items: center; gap: 2px; height: 14px; white-space: nowrap; }
.ln2 { display: block; text-align: center; white-space: nowrap; line-height: 14px; }
.chev { width: 9px; height: 6px; color: #444; }
.chev.inl { display: inline-block; vertical-align: 1px; }
.chev.light { color: #bbb; }
.lnchev { margin-top: 4px; }
.ic16 { width: 16px; height: 16px; }
.ic16.inset { margin-left: 2px; }
.ic14 { width: 16px; height: 14px; color: #c8c8c8; }
.ic14b { width: 14px; height: 14px; }
.small { display: flex; align-items: center; gap: 4px; height: 16px; }
.small-col { display: flex; flex-direction: column; gap: 8px; padding-top: 3px; flex: none; }
.trace-body { display: flex; flex-direction: column; align-items: center; gap: 8px; padding-top: 3px; }
.font-body { padding: 0 0 0 7px; }
.combos { display: flex; gap: 0; }
.combo { height: 22px; background: #f0f0f0; border: 1px solid #c6c6c6; display: flex; align-items: center; justify-content: flex-end; padding-right: 4px; }
.c-name { width: 135px; } .c-size { width: 40px; border-left: 0; padding-right: 4px; }
.font-row { display: flex; align-items: center; height: 17px; margin-top: 6px; gap: 8px; padding-left: 0; }
.fr3 { margin-top: 7px; gap: 12px; padding-left: 3px; }
.vsep { width: 1px; height: 18px; background: #d6d6d6; }
.glyph { color: #c0c0c0; font: bold 12px/16px "Liberation Serif", serif; width: 16px; text-align: center; white-space: nowrap; }
.g-a1, .g-a2 { font: 15px/16px "Liberation Sans", sans-serif; width: 18px; }
.glyph sup, .glyph sub { font-size: 7px; line-height: 0; }
.glyph.it { font-style: italic; }
.glyph.u { text-decoration: underline; font-family: "Liberation Sans", sans-serif; }
.glyph.st { text-decoration: line-through; font: bold 10px/16px "Liberation Sans", sans-serif; }
.glyph.x1, .glyph.x2 { font: bold 12px/16px "Liberation Sans", sans-serif; }
.para-body { padding: 3px 0 0 11px; display: flex; flex-direction: column; }
.para-row { display: flex; gap: 6px; height: 24px; }
.para-row .ic14.lg { width: 16px; height: 14px; }
.align-row { gap: 8px; padding: 4px 0 0 0; }
.ic-al { width: 14px; height: 10px; color: #c8c8c8; }
.style-body { display: flex; padding-left: 5px; gap: 2px; }
.align-body { display: flex; padding-left: 15px; gap: 9px; }
.big-al { width: 46px; align-items: center; }
.small-col-2 { margin-left: -3px; }
.btn-body { display: flex; flex-direction: column; align-items: center; padding-top: 4px; }
.whitebtn { width: 30px; height: 30px; background: #fcfcfc; border: 1px solid #c9c9c9; border-radius: 3px; display: flex; align-items: center; justify-content: center; margin-bottom: 4px; }
.collapse { position: absolute; right: 7px; bottom: 6px; }

/* main */
.main { flex: 1; min-height: 0; display: flex; background: #fbfbfb; }
.left { width: 375px; flex: none; display: flex; flex-direction: column; border-right: 1px solid #c8c9cb; position: relative; background: #fbfbfb; }
.lt-toolbar { height: 29px; flex: none; display: flex; align-items: center; gap: 10px; padding-left: 13px; border-bottom: 1px solid #cfcfcf; }
.ic-tb { width: 14px; height: 13px; }
.tree { height: 249px; flex: none; padding-top: 3px; position: relative; overflow: hidden; letter-spacing: .36px; }
.node { height: 20px; display: flex; align-items: center; padding: 2px 0 0 4px; white-space: nowrap; }
.node.l1 { padding-left: 16px; } .node.l2 { padding-left: 28px; } .node.l3 { padding-left: 40px; }
.sel { background: #3a96d6; color: #fff; width: 364px; }
.tw { width: 8px; height: 8px; margin-right: 7px; color: #444; flex: none; }
.nic { width: 16px; height: 16px; margin-right: 5px; }
.nic.root { width: 14px; height: 13px; margin: 0 5px 0 2px; }
.nic.fold { width: 12px; height: 12px; color: #44566c; margin: 0 7px 0 2px; }
.nic.chip { width: 14px; height: 14px; color: #555; margin: 0 6px 0 1px; }
.thumb { position: absolute; right: 3px; top: 21px; width: 7px; height: 70px; background: #c8c8c8; }
.searchrow { height: 24px; margin: 3px 0 0 5px; flex: none; display: flex; align-items: center; background: #f8f8f8; border: 1px solid #e4e4e4; border-right: 0; }
.searchic { width: 25px; height: 22px; border-right: 1px solid #ddd; display: flex; align-items: center; justify-content: center; }
.ph { color: #aaa; padding-left: 6px; letter-spacing: .2px; }
.tb-toolbar { height: 30px; margin-top: 3px; flex: none; border-top: 1px solid #a8a8a8; border-bottom: 1px solid #cfcfcf; display: flex; align-items: center; gap: 9px; padding-left: 13px; }
.fcircle { width: 16px; height: 16px; border-radius: 50%; background: #cfdce8; color: #fff; font-size: 9px; line-height: 16px; text-align: center; }
.subtabs { height: 30px; flex: none; display: flex; padding-left: 5px; background: #f5f5f5; letter-spacing: .2px; }
.subtab { padding: 5px 10px 0; height: 26px; min-width: 46px; text-align: center; }
.subtab.on { border-bottom: 3px solid #4fa3d9; }
.items { list-style: none; margin: 0; padding: 2px 0 0 23px; flex: 1; background: #fbfbfb; letter-spacing: .2px; }
.items li { height: 20px; display: flex; align-items: center; gap: 5px; }
.kw2 { height: 24px; margin: 0 4px 4px 4px; line-height: 23px; padding-left: 6px; color: #aaa; background: #f8f8f8; border: 1px solid #e0e0e0; flex: none; letter-spacing: .2px; }

.right { flex: 1; min-width: 0; display: flex; flex-direction: column; background: #fff; }
.doctabs { height: 24px; flex: none; display: flex; align-items: flex-start; justify-content: space-between; background: #efefef; border-bottom: 3px solid #cdced1; }
.doctab { height: 24px; width: 77px; background: #cdced1; display: flex; align-items: center; gap: 6px; padding: 1px 0 0 4px; color: #444; margin-bottom: -3px; flex: none; font-size: 11.500px; }
.dtchev { margin: 8px 2px 0 0; color: #888; }
.doctools { height: 38px; flex: none; display: flex; align-items: center; padding: 0 0 0 12px; background: #fff; }
.doctools > * { flex: none; }
.mbtn { width: 23px; height: 22px; background: #8fa6cb; border-radius: 2px; color: #fff; text-align: center; line-height: 22px; margin-right: 8px; }
.nav { width: 16px; height: 13px; margin-right: 9px; }
.crumbs { width: 307px; height: 30px; margin-left: 1px; background: #f9f9f9; border-radius: 4px; display: flex; align-items: center; gap: 5px; padding-left: 18px; letter-spacing: .2px; }
.cq { margin-right: 2px; }
.ctri { width: 4px; height: 7px; color: #222; }
.cq2 { margin: 0 8px 0 9px; }
.view-on { width: 117px; height: 22px; line-height: 22px; background: #4a8ac6; color: #fff; border-radius: 3px; text-align: center; letter-spacing: .2px; }
.view-link { color: #4a8ac6; margin-left: 20px; letter-spacing: .1px; }
.vl1 { margin-left: 10px; }
.canvas { flex: 1; min-height: 0; position: relative; overflow: hidden; background: #fff; }
.dia { width: 648px; height: 451px; }
.lbl rect { fill: #fff; stroke: #b4b4b4; }
.gl path { fill: none; stroke: #8c8c8c; }
.red path { fill: none; stroke: #9c3b3b; stroke-width: 1.100; stroke-dasharray: 8 7; }
.blue path { fill: none; stroke: #3e5f8f; stroke-width: 1.100; stroke-dasharray: 8 7; }
.head path { fill: none; stroke: #3e5f8f; stroke-width: 1.200; }
.uc ellipse { fill: url(#uc); stroke: #000; stroke-width: 2; }
.uct text { font: 11.600px "Noto Sans", sans-serif; fill: #1c1c1c; text-anchor: middle; }
.splitter { position: absolute; right: 0; top: 192px; width: 9px; height: 30px; background: #f2f2f2; border: 1px solid #d0d0d0; border-right: 0; display: flex; align-items: center; justify-content: center; }
.minimap { position: absolute; left: 457px; top: 311px; width: 180px; height: 130px; background: rgba(255,255,255,.85); border: 1px solid #808080; }
.minimap svg { width: 178px; height: 128px; }

/* status */
.status { height: 28px; flex: none; background: #e1e2e4; border-top: 1px solid #d0d1d3; display: flex; align-items: center; padding-left: 578px; }
.st-btn { width: 22px; height: 22px; margin-right: 6px; display: flex; align-items: center; justify-content: center; border-radius: 2px; }
.st-on { background: #eeeff0; border: 1px solid #cfcfcf; }
.zoomtxt { margin-left: 6px; width: 41px; color: #555; font-size: 13px; }
.zbtn { margin-left: 11px; width: 14px; color: #666; font-size: 15px; text-align: center; }
.slider { width: 100px; height: 1px; background: #777; margin-left: 8px; position: relative; }
.slider i { position: absolute; left: 24px; top: -5px; width: 5px; height: 11px; background: #666; }
.zplus { margin-left: 10px; }
.st-move { margin-left: 19px; }
.st-bell { margin-left: 24px; }
.grip { margin-left: 14px; margin-top: 12px; }

/* context menu */
.menu { position: absolute; left: 244px; top: 238px; width: 298px; height: 368px; background: #dfe0e2; border: 1px solid #a0a0a0; padding: 3px; font-size: 12px; letter-spacing: .35px; }
.mi { height: 23px; display: flex; align-items: center; position: relative; color: #333; }
.mic { width: 16px; height: 16px; margin: 0 5px 0 1px; }
.mt { flex: none; }
.ms { position: absolute; left: 203px; letter-spacing: .2px; }
.msub { position: absolute; right: 5px; width: 5px; height: 9px; color: #111; }
.msep { height: 1px; margin: 1px 0 1px; border: 0; background: #c9c9c9; }
.off { color: #a8a8a8; }
.hot { background: #bdd0ec; border: 1px solid #2a6bc8; margin: 0 -1px; padding-left: 0; color: #222; height: 23px; }
.cursor { position: absolute; left: 409px; top: 492px; }
```
